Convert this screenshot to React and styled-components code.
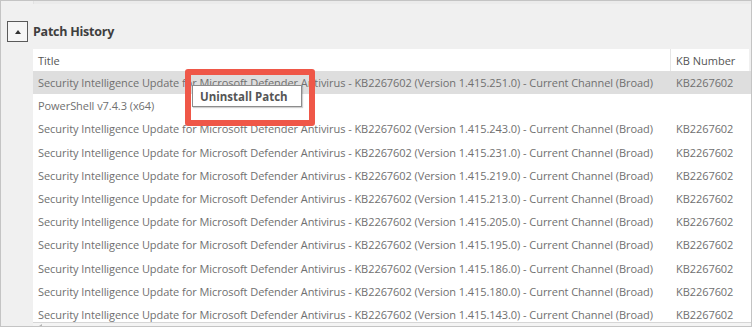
import React from "react";
import styled, { createGlobalStyle } from "styled-components";

const GlobalStyle = createGlobalStyle`
  body {
    margin: 0;
    background: #ffffff;
    font-family: "Open Sans", "Noto Sans", sans-serif;
  }
`;

const Frame = styled.div`
  width: 752px;
  height: 327px;
  box-sizing: border-box;
  border: 1px solid #c4c4c4;
  background: #f0f0f0;
  overflow: hidden;
  display: flex;
  flex-direction: column;
`;

const TopStrip = styled.div`
  height: 3px;
  margin-left: 32px;
  border-left: 1px solid #e2e2e2;
  background: #ebebeb;
`;

const SectionHeader = styled.div`
  display: flex;
  align-items: center;
  gap: 5px;
  height: 21px;
  margin-top: 17px;
  padding-left: 6px;
`;

const ToggleBox = styled.div`
  width: 21px;
  height: 21px;
  box-sizing: border-box;
  border: 1px solid #5a5a5a;
  background: #f6f6f6;
  display: flex;
  align-items: center;
  justify-content: center;

  &::after {
    content: "";
    width: 0;
    height: 0;
    border-left: 3px solid transparent;
    border-right: 3px solid transparent;
    border-bottom: 4px solid #333;
  }
`;

const SectionTitle = styled.span`
  font-size: 12.5px;
  font-weight: 700;
  letter-spacing: -0.25px;
  color: #3e3e3e;
`;

const TablePanel = styled.div`
  position: relative;
  flex: 1;
  min-height: 0;
  margin: 7px 0 0 32px;
  background: #ffffff;
  display: flex;
  flex-direction: column;
`;

const Cols = "638px 78px 1fr";

const HeaderRow = styled.div`
  display: grid;
  grid-template-columns: ${Cols};
  height: 22px;
  flex: none;
`;

const HeaderCell = styled.div`
  display: flex;
  align-items: center;
  padding-left: 5px;
  font-size: 11px;
  color: #555;
  background: ${(p) => (p.$filler ? "#f0f0f0" : "#fff")};
  border-right: ${(p) => (p.$divider ? "1px solid #e6e6e6" : "none")};
`;

const Body = styled.div`
  flex: 1;
  min-height: 0;
  overflow: hidden;
`;

const Row = styled.div`
  display: grid;
  grid-template-columns: ${Cols};
  height: 23.2px;
  background: ${(p) => (p.$selected ? "#dedede" : "#ffffff")};
`;

const Cell = styled.div`
  display: flex;
  align-items: center;
  padding-left: 5px;
  font-size: 11px;
  letter-spacing: -0.06px;
  color: #707070;
  white-space: nowrap;
  overflow: hidden;
`;

const ScrollBar = styled.div`
  flex: none;
  height: 3px;
  border-top: 1px solid #d6d6d6;
  background: #f4f4f4;
  position: relative;

  &::before {
    content: "";
    position: absolute;
    left: 6px;
    top: 1px;
    border-right: 3px solid #b5b5b5;
    border-top: 2px solid transparent;
    border-bottom: 2px solid transparent;
  }
`;

const Highlight = styled.div`
  position: absolute;
  left: 152px;
  top: 20px;
  width: 130px;
  height: 57px;
  box-sizing: border-box;
  border: 6px solid #ef5748;
  border-radius: 3px;
  pointer-events: none;
`;

const ContextMenu = styled.div`
  position: absolute;
  left: 159px;
  top: 36px;
  width: 110px;
  height: 22px;
  box-sizing: border-box;
  background: #ffffff;
  border: 1px solid #8c8c8c;
  box-shadow: 1px 1px 1px rgba(0, 0, 0, 0.18);
  display: flex;
  align-items: center;
  padding-left: 7px;
`;

const MenuItem = styled.span`
  font-size: 11.5px;
  font-weight: 700;
  color: #555;
`;

const versions = [
  "1.415.243.0",
  "1.415.231.0",
  "1.415.219.0",
  "1.415.213.0",
  "1.415.205.0",
  "1.415.195.0",
  "1.415.186.0",
  "1.415.180.0",
  "1.415.143.0",
];

const defender = (v) =>
  `Security Intelligence Update for Microsoft Defender Antivirus - KB2267602 (Version ${v}) - Current Channel (Broad)`;

const rows = [
  { title: defender("1.415.251.0"), kb: "KB2267602", selected: true },
  { title: "PowerShell v7.4.3 (x64)", kb: "" },
  ...versions.map((v) => ({ title: defender(v), kb: "KB2267602" })),
];

const App = () => {
  return (
    <>
      <GlobalStyle />
      <Frame>
        <TopStrip />
        <SectionHeader>
          <ToggleBox />
          <SectionTitle>Patch History</SectionTitle>
        </SectionHeader>
        <TablePanel>
          <HeaderRow>
            <HeaderCell $divider>Title</HeaderCell>
            <HeaderCell>KB Number</HeaderCell>
            <HeaderCell $filler />
          </HeaderRow>
          <Body>
            {rows.map((r, i) => (
              <Row key={i} $selected={r.selected}>
                <Cell>{r.title}</Cell>
                <Cell>{r.kb}</Cell>
                <Cell />
              </Row>
            ))}
          </Body>
          <ScrollBar />
          <Highlight />
          <ContextMenu>
            <MenuItem>Uninstall Patch</MenuItem>
          </ContextMenu>
        </TablePanel>
      </Frame>
    </>
  );
};

export default App;
